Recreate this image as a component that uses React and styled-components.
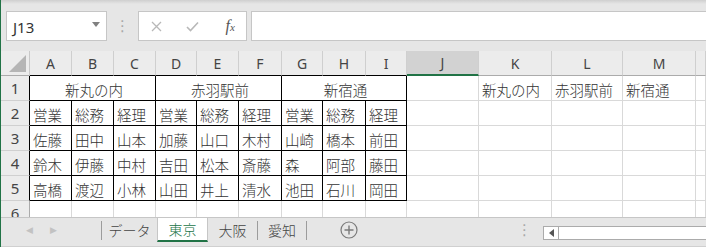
import styled, { createGlobalStyle } from 'styled-components';

const GlobalStyle = createGlobalStyle`
  * { box-sizing: border-box; }
  body {
    margin: 0;
    background: #ffffff;
    overflow: hidden;
    font-family: "Noto Sans CJK JP", "Noto Sans", sans-serif;
  }
`;

const GREEN = '#217346';
const GRID = '#d9d9d9';
const BLACK = '#000000';

const colLetters = ['A', 'B', 'C', 'D', 'E', 'F', 'G', 'H', 'I', 'J', 'K', 'L', 'M', ''];
const stores = ['新丸の内', '赤羽駅前', '新宿通'];
const bodyRows = [
  ['営業', '総務', '経理', '営業', '総務', '経理', '営業', '総務', '経理'],
  ['佐藤', '田中', '山本', '加藤', '山口', '木村', '山崎', '橋本', '前田'],
  ['鈴木', '伊藤', '中村', '吉田', '松本', '斎藤', '森', '阿部', '藤田'],
  ['高橋', '渡辺', '小林', '山田', '井上', '清水', '池田', '石川', '岡田'],
];
const tabs = ['データ', '東京', '大阪', '愛知'];

const App = () => {
  return (
    <Window>
      <GlobalStyle />
      <FormulaBar>
        <NameBox>
          <NameText>J13</NameText>
          <DropArrow />
        </NameBox>
        <Grip>⋮</Grip>
        <FxGroup>
          <FxButton>
            <svg width="11" height="11" viewBox="0 0 11 11">
              <path d="M1 1 L10 10 M10 1 L1 10" stroke="#b8b8b8" strokeWidth="1.3" fill="none" />
            </svg>
          </FxButton>
          <FxButton>
            <svg width="13" height="11" viewBox="0 0 13 11">
              <path d="M1 6 L4.5 9.5 L12 1.5" stroke="#b8b8b8" strokeWidth="1.6" fill="none" />
            </svg>
          </FxButton>
          <FxButton>
            <FxText>
              f<small>x</small>
            </FxText>
          </FxButton>
        </FxGroup>
        <FormulaInput />
      </FormulaBar>

      <Sheet>
        <Corner>
          <svg width="17" height="17" viewBox="0 0 17 17">
            <path d="M17 0 L17 17 L0 17 Z" fill="#b5b5b5" />
          </svg>
        </Corner>
        {colLetters.map((letter, c) => (
          <ColHead key={`h${c}`} $active={letter === 'J'} $table={c <= 8}>
            {letter}
          </ColHead>
        ))}

        <RowHead $table>1</RowHead>
        {stores.map(name => (
          <Cell key={name} $span={3} $right={BLACK} $bottom={BLACK} $center>
            {name}
          </Cell>
        ))}
        <Cell $right={GRID} $bottom={GRID} />
        {stores.map(name => (
          <Cell key={`k${name}`} $right={GRID} $bottom={GRID}>
            {name}
          </Cell>
        ))}
        <Cell $right={GRID} $bottom={GRID} />

        {bodyRows.map((row, r) => (
          <Row key={r} index={r + 2} values={row} />
        ))}

        <RowHead>6</RowHead>
        {colLetters.map((_, c) => (
          <Cell key={`r6${c}`} $right={GRID} $bottom={GRID} />
        ))}
      </Sheet>

      <TabBar>
        <NavArrows>
          <NavArrow>◀</NavArrow>
          <NavArrow>▶</NavArrow>
        </NavArrows>
        <TabSep />
        <Tab $width={55}>{tabs[0]}</Tab>
        <Tab $width={51} $active>
          {tabs[1]}
        </Tab>
        <Tab $width={49}>{tabs[2]}</Tab>
        <TabSep />
        <Tab $width={48}>{tabs[3]}</Tab>
        <TabSep />
        <AddButton>
          <svg width="18" height="18" viewBox="0 0 18 18">
            <circle cx="9" cy="9" r="8" stroke="#7a7a7a" strokeWidth="1.2" fill="none" />
            <path d="M9 4.5 V13.5 M4.5 9 H13.5" stroke="#7a7a7a" strokeWidth="1.4" />
          </svg>
        </AddButton>
        <ScrollGrip>⋮</ScrollGrip>
        <HScroll>
          <ScrollArrow>
            <svg width="5" height="8" viewBox="0 0 5 8">
              <path d="M5 0 L0 4 L5 8 Z" fill="#555" />
            </svg>
          </ScrollArrow>
        </HScroll>
      </TabBar>
    </Window>
  );
};

const Row = ({ index, values }) => (
  <>
    <RowHead $table>{index}</RowHead>
    {values.map((value, c) => (
      <Cell key={c} $right={BLACK} $bottom={BLACK}>
        {value}
      </Cell>
    ))}
    {colLetters.slice(9).map((_, c) => (
      <Cell key={`e${c}`} $right={GRID} $bottom={GRID} />
    ))}
  </>
);

const Window = styled.div`
  width: 706px;
  height: 247px;
  display: flex;
  flex-direction: column;
  border-left: 1px solid ${GREEN};
  overflow: hidden;
`;

const FormulaBar = styled.div`
  display: flex;
  align-items: flex-start;
  height: 51px;
  padding: 11px 0 0 5px;
  background: linear-gradient(#cfcfcf 0px, #e6e6e6 4px, #e6e6e6 100%);
`;

const NameBox = styled.div`
  display: flex;
  align-items: center;
  justify-content: space-between;
  width: 101px;
  height: 30px;
  padding: 0 6px 0 6px;
  background: #ffffff;
  border: 1px solid #c6c6c6;
`;

const NameText = styled.span`
  font-family: "Noto Sans", sans-serif;
  font-size: 15px;
  color: #333333;
  padding-top: 2px;
`;

const DropArrow = styled.span`
  width: 0;
  height: 0;
  border-left: 4px solid transparent;
  border-right: 4px solid transparent;
  border-top: 5px solid #808080;
  margin-bottom: 3px;
`;

const Grip = styled.div`
  width: 31px;
  height: 30px;
  display: flex;
  align-items: center;
  justify-content: center;
  color: #a8a8a8;
  font-size: 15px;
  font-family: "DejaVu Sans", sans-serif;
`;

const FxGroup = styled.div`
  display: flex;
  width: 109px;
  height: 30px;
  background: #ffffff;
  border: 1px solid #c6c6c6;
`;

const FxButton = styled.div`
  flex: 1;
  display: flex;
  align-items: center;
  justify-content: center;
`;

const FxText = styled.span`
  font-family: "Liberation Serif", serif;
  font-style: italic;
  font-size: 16px;
  color: #555555;
  padding-left: 4px;

  small {
    font-size: 11px;
  }
`;

const FormulaInput = styled.div`
  flex: 1;
  height: 30px;
  margin-left: 4px;
  background: #ffffff;
  border: 1px solid #c6c6c6;
  border-right: none;
`;

const Sheet = styled.div`
  display: grid;
  grid-template-columns: 29px 42px 42px 42px 41px 42px 43px 41px 43px 41px 72px 73px 71px 73px 1fr;
  grid-auto-rows: 25px;
  align-content: start;
  height: 166px;
  overflow: hidden;
  background: #ffffff;
`;

const Corner = styled.div`
  display: flex;
  align-items: flex-end;
  justify-content: flex-end;
  padding: 0 3px 3px 0;
  background: #ececec;
  border-right: 1px solid #c8c8c8;
  border-bottom: 1px solid #ababab;
`;

const ColHead = styled.div`
  display: flex;
  align-items: center;
  justify-content: center;
  font-family: "Noto Sans", sans-serif;
  font-size: 14px;
  color: #444444;
  background: ${({ $active }) => ($active ? '#d2d2d2' : '#ececec')};
  border-right: 1px solid #cfcfcf;
  border-bottom: ${({ $active, $table }) =>
    $active ? `2px solid ${GREEN}` : `1px solid ${$table ? BLACK : '#ababab'}`};
`;

const RowHead = styled.div`
  display: flex;
  align-items: center;
  justify-content: center;
  font-family: "Noto Sans", sans-serif;
  font-size: 15px;
  color: #444444;
  background: #ececec;
  border-right: 1px solid ${({ $table }) => ($table ? BLACK : '#ababab')};
  border-bottom: 1px solid #d0d0d0;
`;

const Cell = styled.div`
  grid-column: span ${({ $span }) => $span || 1};
  display: flex;
  align-items: center;
  justify-content: ${({ $center }) => ($center ? 'center' : 'flex-start')};
  padding: 2px 0 0 3px;
  font-size: 14.5px;
  font-weight: 300;
  color: #333333;
  white-space: nowrap;
  overflow: hidden;
  border-right: 1px solid ${({ $right }) => $right};
  border-bottom: 1px solid ${({ $bottom }) => $bottom};
`;

const TabBar = styled.div`
  display: flex;
  align-items: flex-start;
  height: 30px;
  background: #e6e6e6;
  border-top: 1px solid #c6c6c6;
  border-bottom: 1px solid #d0d0d0;
`;

const NavArrows = styled.div`
  display: flex;
  align-items: center;
  gap: 17px;
  width: 100px;
  height: 24px;
  padding-left: 25px;
`;

const NavArrow = styled.span`
  font-size: 9px;
  color: #c2c2c2;
  font-family: "DejaVu Sans", sans-serif;
`;

const TabSep = styled.div`
  width: 1px;
  height: 19px;
  margin-top: 3px;
  background: #9c9c9c;
`;

const Tab = styled.div`
  display: flex;
  align-items: center;
  justify-content: center;
  width: ${({ $width }) => $width}px;
  height: 24px;
  font-size: 14px;
  font-weight: 300;
  color: ${({ $active }) => ($active ? GREEN : '#444444')};
  background: ${({ $active }) => ($active ? '#ffffff' : 'transparent')};
  border-left: ${({ $active }) => ($active ? '1px solid #c6c6c6' : 'none')};
  border-right: ${({ $active }) => ($active ? '1px solid #c6c6c6' : 'none')};
  border-bottom: ${({ $active }) => ($active ? `2px solid ${GREEN}` : 'none')};
`;

const AddButton = styled.div`
  display: flex;
  align-items: center;
  justify-content: center;
  width: 18px;
  height: 24px;
  margin-left: 33px;
`;

const ScrollGrip = styled.div`
  display: flex;
  align-items: center;
  height: 24px;
  margin-left: 159px;
  color: #a8a8a8;
  font-size: 15px;
  font-family: "DejaVu Sans", sans-serif;
`;

const HScroll = styled.div`
  flex: 1;
  display: flex;
  height: 14px;
  margin: 8px 0 0 11px;
  background: #ffffff;
  border: 1px solid #ababab;
  border-right: none;
`;

const ScrollArrow = styled.div`
  display: flex;
  align-items: center;
  justify-content: center;
  width: 15px;
  border-right: 1px solid #ababab;
`;

export default App;
